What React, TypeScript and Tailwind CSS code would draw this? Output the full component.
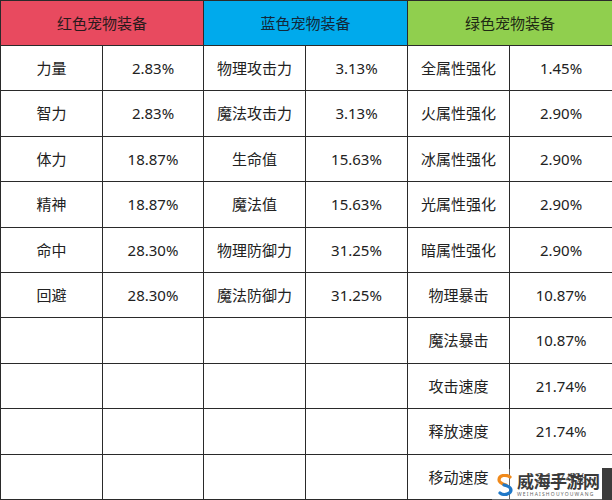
import React from "react";

const rows: string[][] = [
  ["力量", "2.83%", "物理攻击力", "3.13%", "全属性强化", "1.45%"],
  ["智力", "2.83%", "魔法攻击力", "3.13%", "火属性强化", "2.90%"],
  ["体力", "18.87%", "生命值", "15.63%", "冰属性强化", "2.90%"],
  ["精神", "18.87%", "魔法值", "15.63%", "光属性强化", "2.90%"],
  ["命中", "28.30%", "物理防御力", "31.25%", "暗属性强化", "2.90%"],
  ["回避", "28.30%", "魔法防御力", "31.25%", "物理暴击", "10.87%"],
  ["", "", "", "", "魔法暴击", "10.87%"],
  ["", "", "", "", "攻击速度", "21.74%"],
  ["", "", "", "", "释放速度", "21.74%"],
  ["", "", "", "", "移动速度", "21.74%"],
];

function Logo() {
  return (
    <svg width="16" height="22" viewBox="0 0 16 22">
      <path d="M13 3 C9 0 2 1 2 6 C2 9 6 10 9 11" fill="none" stroke="#f08a1c" strokeWidth="3.2" strokeLinecap="round" />
      <path d="M7 11 C11 12 14 13 14 16 C14 20 7 22 3 19" fill="none" stroke="#1f78c8" strokeWidth="3.2" strokeLinecap="round" />
    </svg>
  );
}

export default function App() {
  return (
    <div className="relative w-[612px] h-[500px] bg-white font-['Noto_Sans','Noto_Sans_CJK_SC',sans-serif] text-[15px] text-[#222]">
      <table className="w-[612px] h-[500px] table-fixed border-collapse">
        <colgroup>
          <col className="w-[102px]" />
          <col className="w-[101px]" />
          <col className="w-[102px]" />
          <col className="w-[102px]" />
          <col className="w-[102px]" />
          <col className="w-[103px]" />
        </colgroup>
        <thead>
          <tr className="h-[45px]">
            <th colSpan={2} className="border border-[#2a2a2a] bg-[#e84a5f] font-normal text-[15px] text-[#2a1a1c]">
              红色宠物装备
            </th>
            <th colSpan={2} className="border border-[#2a2a2a] bg-[#00aaec] font-normal text-[15px] text-[#12283a]">
              蓝色宠物装备
            </th>
            <th colSpan={2} className="border border-[#2a2a2a] bg-[#90cf4e] font-normal text-[15px] text-[#1f2a14]">
              绿色宠物装备
            </th>
          </tr>
        </thead>
        <tbody>
          {rows.map((r, i) => (
            <tr key={i} className="h-[45px]">
              {r.map((c, j) => (
                <td key={j} className="border border-[#2a2a2a] text-center align-middle p-0">
                  {c}
                </td>
              ))}
            </tr>
          ))}
        </tbody>
      </table>

      {/* watermark */}
      <div className="absolute left-[492px] top-[469px] w-[110px] h-[31px] bg-white/30 flex items-center gap-[4px] pl-[5px]">
        <Logo />
        <div className="flex flex-col items-start leading-none">
          <span className="text-[17px] font-bold text-[#3a3a3a] tracking-[-0.5px] leading-[18px]">威海手游网</span>
          <span className="text-[5px] text-[#666] tracking-[1.2px] mt-[1px]">WEIHAISHOUYOUWANG</span>
        </div>
      </div>
      <div className="absolute left-[602px] top-[468px] w-[10px] h-[32px] bg-[#3c3c3c]" />
    </div>
  );
}
